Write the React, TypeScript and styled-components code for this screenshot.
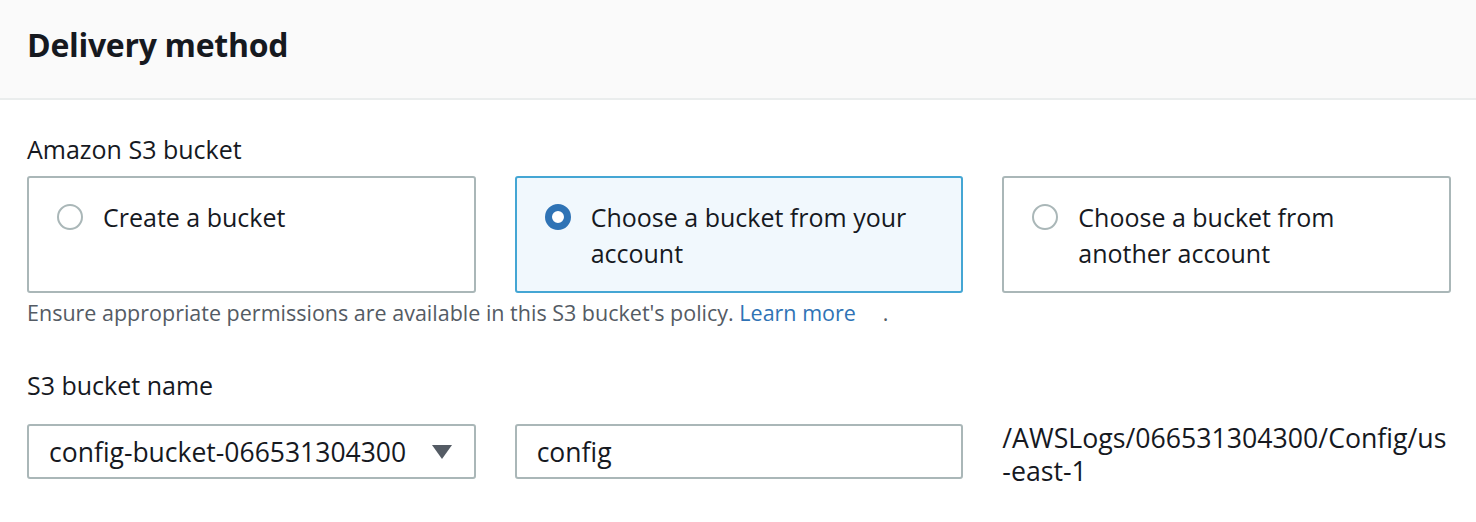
import React, { useState } from 'react';
import styled, { createGlobalStyle } from 'styled-components';

const GlobalStyle = createGlobalStyle`
  body {
    margin: 0;
    background: #ffffff;
    font-family: "Open Sans", "Noto Sans", Arial, sans-serif;
    color: #16191f;
  }
`;

const Panel = styled.section`
  width: 1476px;
  background: #ffffff;
`;

const Header = styled.header`
  height: 100px;
  box-sizing: border-box;
  padding: 0 27px 9px;
  display: flex;
  align-items: center;
  background: #fafafa;
  border-bottom: 2px solid #eaeded;
`;

const Title = styled.h2`
  margin: 0;
  font-size: 32px;
  font-weight: 700;
  letter-spacing: -0.3px;
  color: #16191f;
`;

const Body = styled.div`
  padding: 31px 25px 0 27px;
`;

const Field = styled.div`
  margin-bottom: 37px;
`;

const Label = styled.div`
  font-size: 25px;
  line-height: 36px;
  margin-bottom: 9px;
`;

const TileGrid = styled.div`
  display: grid;
  grid-template-columns: repeat(3, 1fr);
  column-gap: 39px;
`;

const Tile = styled.label<{ $selected: boolean }>`
  box-sizing: border-box;
  height: 117px;
  padding: 21px 20px 0 28px;
  display: flex;
  align-items: flex-start;
  gap: 20px;
  border: 2px solid ${p => (p.$selected ? '#44a6d4' : '#aab7b8')};
  border-radius: 3px;
  background: ${p => (p.$selected ? '#f1f8fd' : '#ffffff')};
  cursor: pointer;
`;

const Radio = styled.span<{ $checked: boolean }>`
  flex: none;
  box-sizing: border-box;
  width: 26px;
  height: 26px;
  margin-top: 5px;
  border-radius: 50%;
  border: ${p => (p.$checked ? '7px solid #2f73b5' : '2px solid #aab7b8')};
  background: #ffffff;
`;

const TileText = styled.span`
  font-size: 25px;
  line-height: 36px;
  color: #16191f;
`;

const Help = styled.div`
  margin-top: 3px;
  font-size: 21.5px;
  line-height: 34px;
  color: #545b64;
`;

const Link = styled.a`
  color: #2f73b5;
  text-decoration: none;
  margin-right: 27px;
`;

const InputRow = styled.div`
  display: grid;
  grid-template-columns: repeat(3, 1fr);
  column-gap: 39px;
  align-items: start;
  margin-top: 21px;
`;

const Box = styled.div`
  box-sizing: border-box;
  height: 55px;
  padding: 0 22px 0 20px;
  display: flex;
  align-items: center;
  justify-content: space-between;
  border: 2px solid #aab7b8;
  border-radius: 3px;
  background: #ffffff;
  font-size: 26.5px;
  color: #16191f;
`;

const Caret = styled.svg`
  width: 20px;
  height: 14px;
`;

const Suffix = styled.div`
  margin-top: -3px;
  font-size: 26.7px;
  line-height: 33px;
  color: #16191f;
  word-break: break-all;
`;

const options = [
  'Create a bucket',
  'Choose a bucket from your account',
  'Choose a bucket from another account',
];

const App: React.FC = () => {
  const [selected, setSelected] = useState(1);

  return (
    <>
      <GlobalStyle />
      <Panel>
        <Header>
          <Title>Delivery method</Title>
        </Header>
        <Body>
          <Field>
            <Label>Amazon S3 bucket</Label>
            <TileGrid>
              {options.map((text, i) => (
                <Tile key={text} $selected={selected === i} onClick={() => setSelected(i)}>
                  <Radio $checked={selected === i} />
                  <TileText>{text}</TileText>
                </Tile>
              ))}
            </TileGrid>
            <Help>
              Ensure appropriate permissions are available in this S3 bucket's policy.{' '}
              <Link href="#">Learn more</Link>.
            </Help>
          </Field>
          <Field>
            <Label>S3 bucket name</Label>
            <InputRow>
              <Box>
                <span>config-bucket-066531304300</span>
                <Caret viewBox="0 0 20 14">
                  <path d="M0 0 L20 0 L10 14 Z" fill="#545b64" />
                </Caret>
              </Box>
              <Box>config</Box>
              <Suffix>/AWSLogs/066531304300/Config/us-east-1</Suffix>
            </InputRow>
          </Field>
        </Body>
      </Panel>
    </>
  );
};

export default App;
